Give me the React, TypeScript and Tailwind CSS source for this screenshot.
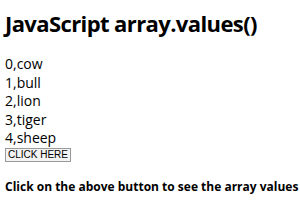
export default function App() {
  const animals = ["cow", "bull", "lion", "tiger", "sheep"];
  return (
    <div className="h-[210px] w-[300px] overflow-hidden bg-white px-[5px] text-black font-['Open_Sans',sans-serif]">
      <h1 className="pt-[9px] text-[22px] font-bold leading-[28px] tracking-[-0.6px] whitespace-nowrap">
        JavaScript array.values()
      </h1>
      <div className="mt-[18px] text-[14px] leading-[18.5px]">
        {animals.map((a, i) => (
          <div key={a}>
            {i},{a}
          </div>
        ))}
      </div>
      <button
        type="button"
        className="block h-[14px] w-[66px] whitespace-nowrap border border-[#9a9a9a] bg-[#f3f3f3] px-0 text-[10px] leading-[12px] font-['Liberation_Sans',sans-serif]"
      >
        CLICK HERE
      </button>
      <p className="mt-[17px] text-[12px] font-bold leading-[16px] whitespace-nowrap">
        Click on the above button to see the array values
      </p>
    </div>
  );
}
